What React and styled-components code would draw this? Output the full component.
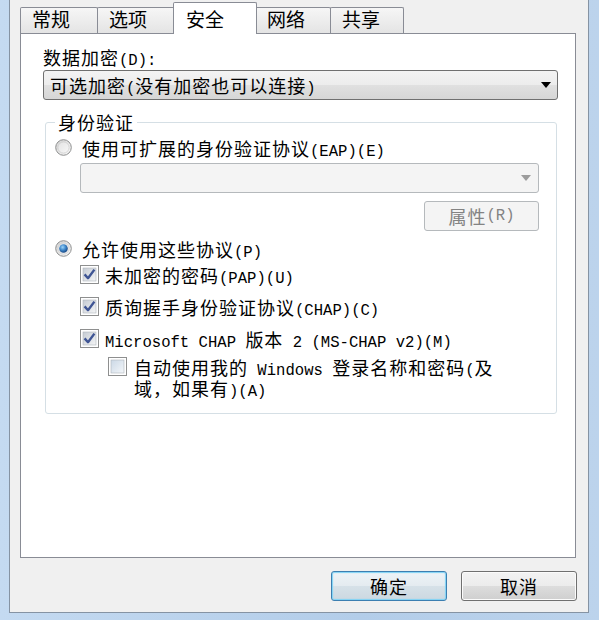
import React from 'react'
import styled, { createGlobalStyle } from 'styled-components'

const GlobalStyle = createGlobalStyle`
    html, body {
        margin: 0;
        padding: 0;
        overflow: hidden;
        background: #bcd3ec;
    }
    body {
        font-family: "Noto Sans CJK SC", "Liberation Sans", sans-serif;
        font-size: 18px;
        letter-spacing: 1px;
        color: #000;
    }
`

// 外枠 (Win7 の水色フレーム)
const Window = styled.div`
    box-sizing: border-box;
    width: 599px;
    height: 620px;
    padding: 0 10px 7px 9px;
    background: linear-gradient(90deg, #c4daf1 0%, #b3cde9 60%, #bcd3ec 100%);
    display: flex;
`

const Dialog = styled.div`
    flex: 1;
    display: flex;
    flex-direction: column;
    background: #f0f0f0;
    border: 1px solid #8593a3;
    border-top: none;
`

const TabStrip = styled.div`
    height: 33px;
    display: flex;
    align-items: flex-end;
    padding-left: 10px;
    flex-shrink: 0;
`

const Tab = styled.div`
    box-sizing: border-box;
    width: ${p => p.$w}px;
    height: ${p => (p.$active ? 32 : 26)}px;
    margin: 0 0 ${p => (p.$active ? -1 : 0)}px ${p => p.$ml}px;
    padding: ${p => (p.$active ? 6 : 1)}px 0 0 ${p => (p.$active ? 12 : 11)}px;
    line-height: 20px;
    font-size: 19px;
    letter-spacing: 0;
    border: 1px solid #898c95;
    border-bottom: none;
    border-radius: 2px 2px 0 0;
    background: ${p => (p.$active ? '#fff' : 'linear-gradient(#f6f6f6, #e4e4e4)')};
    position: relative;
    z-index: ${p => (p.$active ? 1 : 0)};
`

const Panel = styled.div`
    flex: 1;
    margin: 0 12px 0 10px;
    padding: 13px 17px 0 22px;
    background: #fff;
    border: 1px solid #898c95;
    display: flex;
    flex-direction: column;
`

const FieldLabel = styled.div`
    line-height: 20px;
    height: 20px;
`

// 半角の英数字は等幅で (SimSun 風)。行の高さには影響させない
const Mono = styled.span`
    font-family: "Liberation Mono", "DejaVu Sans Mono", monospace;
    font-size: 15.6px;
    letter-spacing: 0;
    line-height: 0;
`

const Select = styled.div`
    box-sizing: border-box;
    height: 30px;
    margin-top: ${p => p.$mt || 0}px;
    margin-left: ${p => p.$ml || 0}px;
    padding: 0 0 0 6px;
    display: flex;
    align-items: center;
    justify-content: space-between;
    border: 1px solid ${p => (p.$disabled ? '#b5b9bc' : '#707070')};
    border-radius: 3px;
    background: ${p => (p.$disabled
        ? '#f4f4f4'
        : 'linear-gradient(#f3f3f3 0%, #ececec 50%, #e0e0e0 51%, #d6d6d6 100%)')};
    line-height: 20px;
`

const Arrow = styled.span`
    width: 0;
    height: 0;
    margin-right: ${p => p.$mr}px;
    border-left: 5px solid transparent;
    border-right: 5px solid transparent;
    border-top: 6px solid ${p => (p.$disabled ? '#9c9c9c' : '#000')};
`

const Group = styled.fieldset`
    margin: 12px 1px 0 2px;
    padding: 0 17px 14px 9px;
    border: 1px solid #d5dfe5;
    border-radius: 3px;
    display: flex;
    flex-direction: column;
    min-width: 0;
`

const Legend = styled.legend`
    padding: 0 3px;
    line-height: 20px;
`

const OptionRow = styled.div`
    display: flex;
    align-items: flex-start;
    gap: ${p => p.$gap}px;
    margin-top: ${p => p.$mt}px;
    margin-left: ${p => p.$ml || 0}px;
`

const OptionText = styled.span`
    display: block;
    line-height: ${p => p.$lh || 20}px;
    max-width: ${p => (p.$wrap ? `${p.$wrap}px` : 'none')};
`

const PropsButton = styled.div`
    box-sizing: border-box;
    align-self: flex-end;
    width: 115px;
    height: 30px;
    margin-top: 8px;
    border: 1px solid #b5b9bc;
    border-radius: 3px;
    background: #f4f4f4;
    color: #838383;
    display: flex;
    align-items: center;
    justify-content: center;
    line-height: 20px;
`

const ButtonRow = styled.div`
    display: flex;
    justify-content: flex-end;
    gap: 14px;
    padding: 13px 11px 11px 0;
`

const DialogButton = styled.div`
    box-sizing: border-box;
    width: 116px;
    height: 30px;
    display: flex;
    align-items: center;
    justify-content: center;
    line-height: 20px;
    border-radius: 3px;
    border: 1px solid ${p => (p.$default ? '#3c7fb1' : '#707070')};
    box-shadow: ${p => (p.$default ? 'inset 0 0 1px 1px #7fd3f5' : 'inset 0 0 0 1px #fbfbfb')};
    background: ${p => (p.$default
        ? 'linear-gradient(#eef3f7 0%, #e4ebf0 50%, #d6e1e8 51%, #ccd8e1 100%)'
        : 'linear-gradient(#f3f3f3 0%, #ececec 50%, #dddddd 51%, #cfcfcf 100%)')};
`

const Radio = ({ checked }) => (
    <svg width="17" height="17" viewBox="0 0 17 17" style={{ marginTop: 1, flexShrink: 0 }}>
        <defs>
            <linearGradient id="rOut" x1="0" y1="0" x2="1" y2="1">
                <stop offset="0" stopColor="#d2d2d2" />
                <stop offset="1" stopColor="#fbfbfb" />
            </linearGradient>
            <linearGradient id="rIn" x1="0" y1="0" x2="1" y2="1">
                <stop offset="0" stopColor="#e3e3e3" />
                <stop offset="1" stopColor="#f7f7f7" />
            </linearGradient>
            <radialGradient id="rDot" cx="0.4" cy="0.35" r="0.7">
                <stop offset="0" stopColor="#9bd3f8" />
                <stop offset="0.5" stopColor="#3d86c9" />
                <stop offset="1" stopColor="#153f7a" />
            </radialGradient>
        </defs>
        <circle cx="8.5" cy="8.5" r="7.8" fill="url(#rOut)" stroke="#8e8f8f" strokeWidth="1" />
        <circle cx="8.5" cy="8.5" r="5.6" fill="url(#rIn)" stroke="#c2c2c2" strokeWidth="0.6" />
        {checked && <circle cx="8.5" cy="8.5" r="4.3" fill="url(#rDot)" />}
    </svg>
)

const Check = ({ checked }) => (
    <svg width="19" height="19" viewBox="0 0 19 19" style={{ marginTop: 0, flexShrink: 0 }}>
        <defs>
            <linearGradient id="cIn" x1="0" y1="0" x2="1" y2="1">
                <stop offset="0" stopColor="#c5cbd3" />
                <stop offset="1" stopColor="#f4f5f6" />
            </linearGradient>
            <linearGradient id="cOff" x1="0" y1="0" x2="1" y2="1">
                <stop offset="0" stopColor="#cbd8e6" />
                <stop offset="1" stopColor="#f3f6f9" />
            </linearGradient>
        </defs>
        <rect x="0.5" y="0.5" width="18" height="18" fill="#fff" stroke="#8e8f8f" />
        <rect x="3" y="3" width="13" height="13" fill={checked ? 'url(#cIn)' : 'url(#cOff)'} stroke="#aeb4bb" strokeWidth="0.6" />
        {checked && (
            <path d="M4.6 9.4 L8 13.2 L14.4 4.6" fill="none" stroke="#3f5594" strokeWidth="2.4" strokeLinejoin="round" />
        )}
    </svg>
)

const tabs = [
    { label: '常规', w: 78, ml: 0 },
    { label: '选项', w: 78, ml: -1 },
    { label: '安全', w: 84, ml: -2, active: true },
    { label: '网络', w: 76, ml: -2 },
    { label: '共享', w: 74, ml: -1 },
]

const App = () => {
    return (
        <>
            <GlobalStyle />
            <Window>
                <Dialog>
                    <TabStrip>
                        {tabs.map(t => (
                            <Tab key={t.label} $w={t.w} $ml={t.ml} $active={t.active}>{t.label}</Tab>
                        ))}
                    </TabStrip>
                    <Panel>
                        <FieldLabel>数据加密<Mono>(D):</Mono></FieldLabel>
                        <Select $mt={3}>
                            <span>可选加密<Mono>(</Mono>没有加密也可以连接<Mono>)</Mono></span>
                            <Arrow $mr={6} />
                        </Select>
                        <Group>
                            <Legend>身份验证</Legend>
                            <OptionRow $gap={10} $mt={6}>
                                <Radio />
                                <OptionText>使用可扩展的身份验证协议<Mono>(EAP)(E)</Mono></OptionText>
                            </OptionRow>
                            <Select $disabled $mt={5} $ml={25}>
                                <span />
                                <Arrow $disabled $mr={7} />
                            </Select>
                            <PropsButton>属性<Mono>(R)</Mono></PropsButton>
                            <OptionRow $gap={10} $mt={8}>
                                <Radio checked />
                                <OptionText>允许使用这些协议<Mono>(P)</Mono></OptionText>
                            </OptionRow>
                            <OptionRow $gap={6} $mt={6} $ml={25}>
                                <Check checked />
                                <OptionText>未加密的密码<Mono>(PAP)(U)</Mono></OptionText>
                            </OptionRow>
                            <OptionRow $gap={6} $mt={12} $ml={25}>
                                <Check checked />
                                <OptionText>质询握手身份验证协议<Mono>(CHAP)(C)</Mono></OptionText>
                            </OptionRow>
                            <OptionRow $gap={6} $mt={12} $ml={25}>
                                <Check checked />
                                <OptionText><Mono>Microsoft CHAP </Mono>版本<Mono> 2 (MS-CHAP v2)(M)</Mono></OptionText>
                            </OptionRow>
                            <OptionRow $gap={7} $mt={8} $ml={53}>
                                <Check />
                                <OptionText $lh={21} $wrap={372}>
                                    自动使用我的<Mono> Windows </Mono>登录名称和密码<Mono>(</Mono>及域，如果有<Mono>)(A)</Mono>
                                </OptionText>
                            </OptionRow>
                        </Group>
                    </Panel>
                    <ButtonRow>
                        <DialogButton $default>确定</DialogButton>
                        <DialogButton>取消</DialogButton>
                    </ButtonRow>
                </Dialog>
            </Window>
        </>
    )
}

export default App
